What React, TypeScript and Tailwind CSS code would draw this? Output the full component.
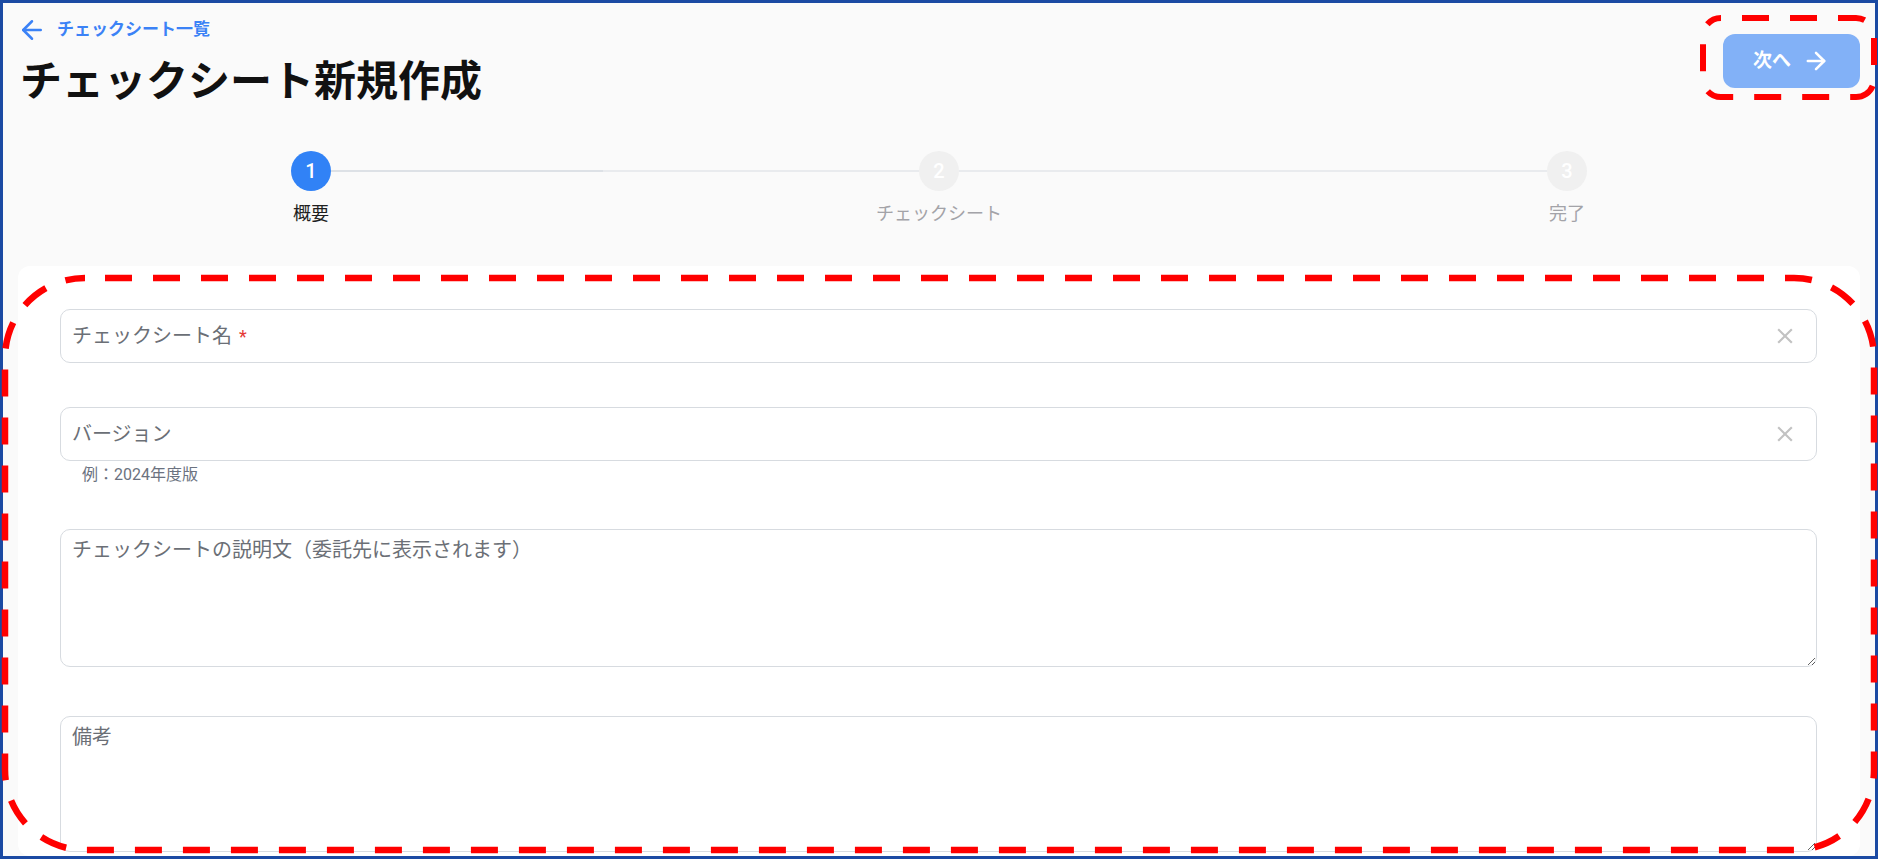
import { ArrowLeft, ArrowRight } from "lucide-react";

function ClearIcon() {
  return (
    <svg width="26" height="26" viewBox="0 0 24 24" className="shrink-0">
      <path
        fill="#c2c2c2"
        d="M19 6.41 17.59 5 12 10.59 6.41 5 5 6.41 10.59 12 5 17.59 6.41 19 12 13.41 17.59 19 19 17.59 13.41 12z"
      />
    </svg>
  );
}

function Step({ n, label, active }: { n: number; label: string; active?: boolean }) {
  return (
    <div className="w-10 flex flex-col items-center shrink-0">
      <div
        className={
          active
            ? "w-10 h-10 rounded-full bg-[#3182f6] text-white flex items-center justify-center text-[20px] font-medium"
            : "w-10 h-10 rounded-full bg-[#f0f0f0] text-white flex items-center justify-center text-[20px] font-medium"
        }
      >
        {n}
      </div>
      <div
        className={
          active
            ? "mt-[9px] whitespace-nowrap text-[18px] leading-[27px] text-[#1f1f1f]"
            : "mt-[9px] whitespace-nowrap text-[18px] leading-[27px] text-[#a3a3a8]"
        }
      >
        {label}
      </div>
    </div>
  );
}

export default function App() {
  return (
    <div className="relative w-[1878px] h-[859px] overflow-hidden font-[Roboto,'Noto_Sans_CJK_JP',sans-serif]">
      <div className="w-full h-full border-[3px] border-[#1b4aa3] bg-[#fafafa] flex flex-col">
        {/* header */}
        <div className="flex justify-between items-start pl-[14px] pr-[15px]">
          <div className="flex flex-col">
            <a className="flex items-center gap-[10px] mt-[15px] h-[24px] text-[#3b82f6] text-[17px] font-semibold">
              <ArrowLeft size={30} strokeWidth={2} />
              <span>チェックシート一覧</span>
            </a>
            <h1 className="mt-[15px] ml-[3px] text-[42px] leading-[50px] font-bold text-[#111]">
              チェックシート新規作成
            </h1>
          </div>
          <button className="mt-[31px] w-[137px] h-[54px] rounded-[12px] bg-[#82b1f7] text-white flex items-center pl-[30px] gap-[11px]">
            <span className="text-[19px] font-bold">次へ</span>
            <ArrowRight size={28} strokeWidth={2.2} />
          </button>
        </div>

        {/* stepper */}
        <div className="mt-[44px] ml-[288px] w-[1296px] flex items-start">
          <Step n={1} label="概要" active />
          <div className="flex-1 h-[2px] mt-[19px] flex">
            <div className="w-[272px] bg-[#dde1e6]" />
            <div className="flex-1 bg-[#e9ebee]" />
          </div>
          <Step n={2} label="チェックシート" />
          <div className="flex-1 h-[2px] mt-[19px] bg-[#e9ebee]" />
          <Step n={3} label="完了" />
        </div>

        {/* card */}
        <div className="mt-[39px] mx-[15px] flex-1 rounded-[12px] bg-white pt-[43px] pl-[42px] pr-[43px]">
          <div className="h-[54px] rounded-[10px] border border-[#d7dbe0] flex items-center pl-[11px] pr-[18px]">
            <div className="flex-1 text-[20px] text-[#6b6f76] flex items-center">
              <span>チェックシート名</span>
              <span className="ml-[7px] text-[18px] text-[#e53935]">*</span>
            </div>
            <ClearIcon />
          </div>

          <div className="mt-[44px] h-[54px] rounded-[10px] border border-[#d7dbe0] flex items-center pl-[11px] pr-[18px]">
            <div className="flex-1 text-[20px] text-[#6b6f76]">バージョン</div>
            <ClearIcon />
          </div>
          <div className="mt-[3px] pl-[22px] text-[16px] leading-[22px] text-[#6b7280]">例：2024年度版</div>

          <textarea
            className="mt-[43px] block w-full h-[138px] rounded-[10px] border border-[#d7dbe0] bg-white px-[11px] pt-[6px] text-[20px] leading-[28px] outline-none placeholder:text-[#6b6f76]"
            placeholder="チェックシートの説明文（委託先に表示されます）"
          />
          <textarea
            className="mt-[49px] block w-full h-[136px] rounded-[10px] border border-[#d7dbe0] bg-white px-[11px] pt-[6px] text-[20px] leading-[28px] outline-none placeholder:text-[#6b6f76]"
            placeholder="備考"
          />
        </div>
      </div>

      {/* annotation overlay */}
      <svg className="absolute left-0 top-0 pointer-events-none" width="1878" height="859">
        <rect
          x="1703"
          y="18"
          width="171"
          height="79"
          rx="18"
          fill="none"
          stroke="#ff0000"
          strokeWidth="6"
          strokeDasharray="27 21"
          strokeDashoffset="27"
        />
        <rect
          x="5"
          y="278"
          width="1869"
          height="572"
          rx="80"
          fill="none"
          stroke="#ff0000"
          strokeWidth="6.5"
          strokeDasharray="27 21"
          strokeDashoffset="28"
        />
      </svg>
    </div>
  );
}
